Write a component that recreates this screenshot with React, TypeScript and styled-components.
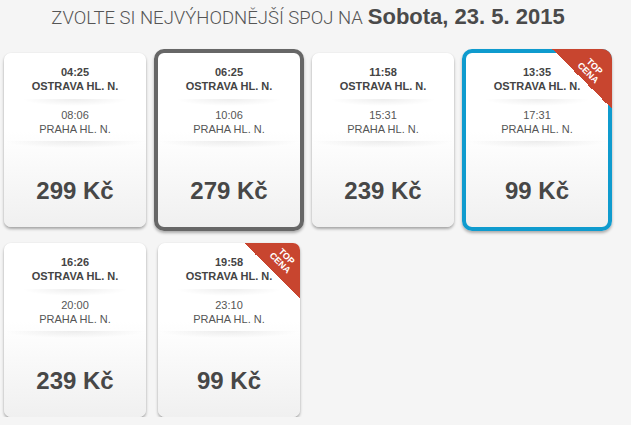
import React from 'react';
import styled, { createGlobalStyle, css } from 'styled-components';

const Global = createGlobalStyle`
  html, body { margin: 0; padding: 0; background: #f5f5f5; }
  body { font-family: "Liberation Sans", Arial, sans-serif; color: #444; }
  * { box-sizing: border-box; }
`;

const Page = styled.div`
  width: 616px;
  padding: 0 4px;
`;

const Title = styled.h1`
  margin: 0;
  height: 53px;
  padding-top: 5px;
  display: flex;
  justify-content: center;
  align-items: baseline;
  gap: 5px;
  line-height: 24px;
  font-weight: normal;
  color: #4a4a4a;
  white-space: nowrap;
`;

const TitleLight = styled.span`
  font-family: Roboto, "Liberation Sans", sans-serif;
  font-weight: 300;
  font-size: 18.5px;
  color: #555;
`;

const TitleBold = styled.span`
  font-family: "Liberation Sans", Arial, sans-serif;
  font-weight: bold;
  font-size: 22px;
  color: #4a4a4a;
`;

const Grid = styled.div`
  display: grid;
  grid-template-columns: repeat(4, 142px);
  column-gap: 12px;
  row-gap: 16px;
`;

type Frame = 'none' | 'gray' | 'blue';

const frameColor: Record<Frame, string> = {
  none: 'transparent',
  gray: '#676767',
  blue: '#0f9bce',
};

const Card = styled.div<{ $frame: Frame }>`
  position: relative;
  height: 174px;
  border-radius: 7px;
  background: linear-gradient(to bottom, #ffffff 0%, #ffffff 45%, #f0f0f0 100%);
  box-shadow: 0 2px 3px rgba(0, 0, 0, 0.32), 0 0 1px rgba(0, 0, 0, 0.12);
  display: flex;
  flex-direction: column;
  text-align: center;
  ${(p) =>
    p.$frame !== 'none' &&
    css`
      margin: -4px;
      height: 182px;
      border: 4px solid ${frameColor[p.$frame]};
      border-radius: 10px;
      box-shadow: 0 2px 3px rgba(0, 0, 0, 0.3);
    `}
`;

const Section = styled.div<{ $top: number; $bottom: number }>`
  padding: ${(p) => p.$top}px 0 ${(p) => p.$bottom}px;
`;

const Time = styled.div<{ $bold?: boolean }>`
  font-size: 11px;
  line-height: 13.5px;
  font-weight: ${(p) => (p.$bold ? 'bold' : 'normal')};
  color: ${(p) => (p.$bold ? '#444' : '#555')};
`;

const Station = styled.div<{ $bold?: boolean }>`
  font-size: 11px;
  line-height: 13.5px;
  font-weight: ${(p) => (p.$bold ? 'bold' : 'normal')};
  color: ${(p) => (p.$bold ? '#444' : '#555')};
`;

const Divider = styled.div<{ $inset: number }>`
  height: 7px;
  margin: 0 ${(p) => p.$inset}px;
  background: radial-gradient(ellipse 50% 100% at 50% 0%, rgba(0, 0, 0, 0.07), rgba(0, 0, 0, 0) 100%);
`;

const Price = styled.div`
  padding-top: 29px;
  font-size: 24px;
  line-height: 28px;
  font-weight: bold;
  color: #474747;
`;

const Ribbon = styled.div<{ $offset: number }>`
  position: absolute;
  top: ${(p) => -p.$offset}px;
  right: ${(p) => -p.$offset}px;
  width: ${(p) => 56 + p.$offset}px;
  height: ${(p) => 56 + p.$offset}px;
  border-top-right-radius: ${(p) => (p.$offset ? 10 : 7)}px;
  background: linear-gradient(to bottom left, #c8452f 50%, rgba(200, 69, 47, 0) 50%);
  pointer-events: none;
`;

const RibbonText = styled.div<{ $offset: number }>`
  position: absolute;
  top: ${(p) => 17 + p.$offset}px;
  right: ${(p) => 17 + p.$offset}px;
  width: 34px;
  transform: translate(50%, -50%) rotate(45deg);
  color: #fff;
  font-size: 9px;
  line-height: 9px;
  font-weight: bold;
  text-align: center;
`;

type Trip = {
  dep: string;
  arr: string;
  price: string;
  frame: Frame;
  top: boolean;
};

const trips: Trip[] = [
  { dep: '04:25', arr: '08:06', price: '299 Kč', frame: 'none', top: false },
  { dep: '06:25', arr: '10:06', price: '279 Kč', frame: 'gray', top: false },
  { dep: '11:58', arr: '15:31', price: '239 Kč', frame: 'none', top: false },
  { dep: '13:35', arr: '17:31', price: '99 Kč', frame: 'blue', top: true },
  { dep: '16:26', arr: '20:00', price: '239 Kč', frame: 'none', top: false },
  { dep: '19:58', arr: '23:10', price: '99 Kč', frame: 'none', top: true },
];

export default function App() {
  return (
    <Page>
      <Global />
      <Title>
        <TitleLight>ZVOLTE SI NEJVÝHODNĚJŠÍ SPOJ NA</TitleLight>
        <TitleBold>Sobota, 23. 5. 2015</TitleBold>
      </Title>
      <Grid>
        {trips.map((t, i) => {
          const offset = t.frame === 'none' ? 0 : 4;
          return (
            <Card key={i} $frame={t.frame}>
              <Section $top={13} $bottom={6}>
                <Time $bold>{t.dep}</Time>
                <Station $bold>OSTRAVA HL. N.</Station>
              </Section>
              <Divider $inset={18} />
              <Section $top={3} $bottom={5}>
                <Time>{t.arr}</Time>
                <Station>PRAHA HL. N.</Station>
              </Section>
              <Divider $inset={0} />
              <Price>{t.price}</Price>
              {t.top && (
                <Ribbon $offset={offset}>
                  <RibbonText $offset={offset}>
                    TOP
                    <br />
                    CENA
                  </RibbonText>
                </Ribbon>
              )}
            </Card>
          );
        })}
      </Grid>
    </Page>
  );
}
